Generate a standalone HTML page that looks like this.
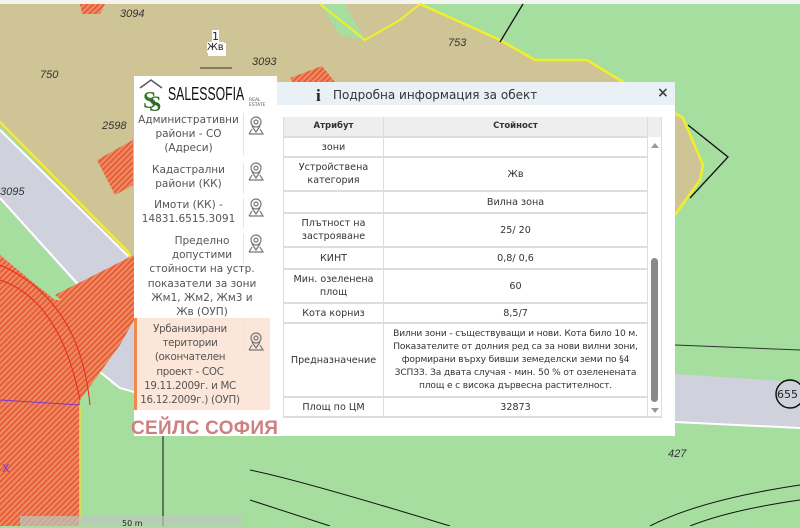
<!DOCTYPE html>
<html><head><meta charset="utf-8">
<style>
*{margin:0;padding:0;box-sizing:border-box}
body{width:800px;height:526px;overflow:hidden;position:relative;font-family:"DejaVu Sans","Liberation Sans",sans-serif;background:#a5de9f}
.abs{position:absolute}
.lbl{position:absolute;font:italic 11px "Liberation Sans",sans-serif;color:#333}
#panel{left:134px;top:82px;width:541px;height:354px;background:#fff}
#hdr{left:277px;top:82px;width:398px;height:23px;background:#e9f1f6}
#logo{left:134px;top:76px;width:143px;height:36px;background:#fff}
#list{left:134px;top:112px;width:136px;height:298px;overflow:hidden;background:#fff}
.it{position:absolute;left:0;width:136px;font-size:10.5px;line-height:14.2px;color:#555;text-align:center}
.it .t{width:109px;text-align:center}
.it .ic{position:absolute;left:109px;top:0;width:27px;border-left:1px solid #e4e4e4}
table{position:absolute;left:283px;top:117px;width:365px;border-collapse:collapse;font-size:9.6px;color:#333}
td{border-bottom:2px solid #ddd;border-right:1px solid #ddd;text-align:center;vertical-align:middle;line-height:13px}
td:first-child{width:100px;border-left:1px solid #ddd}
</style></head><body>
<svg class="abs" style="left:0;top:0" width="800" height="526">
<defs>
<pattern id="h" width="4" height="4" patternUnits="userSpaceOnUse" patternTransform="rotate(45)">
<rect width="4" height="4" fill="#ee8a5c"/><rect width="1.6" height="4" fill="#e5553a"/></pattern>
</defs>
<rect width="800" height="526" fill="#a5de9f"/>
<rect width="800" height="4" fill="#f3f3f0"/>
<polygon points="0,4 420,4 365,40 420,4 500,40 535,60 587,60 620,80 683,118 703,165 700,180 675,215 600,215 300,300 133,262 0,125" fill="#cfc496"/>
<polygon points="320,4 345,4 365,40 340,35" fill="#a5de9f"/>
<polyline points="320,4 365,40 400,20 420,4" fill="none" stroke="#f2ee2c" stroke-width="2"/>
<polyline points="420,4 500,40 535,60 587,60 620,80 683,118 703,165 700,180 675,215" fill="none" stroke="#f2ee2c" stroke-width="2.5"/>
<polyline points="0,122 128,252 134,264" fill="none" stroke="#f2ee2c" stroke-width="2.5"/>
<polygon points="0,128 130,258 134,270 134,392 112,385 95,360 90,320 85,295 0,200" fill="#cfd2dc"/>
<polyline points="0,130 128,256" fill="none" stroke="#fff" stroke-width="2"/>
<polyline points="0,198 85,292 90,330 100,372 120,388 134,392" fill="none" stroke="#fff" stroke-width="2"/>
<polygon points="675,374 800,382 800,428 675,422" fill="#cfd2dc"/>
<polyline points="675,422 800,428" stroke="#fff" stroke-width="2" fill="none"/>
<polyline points="675,345 800,350" stroke="#333" stroke-width="1" fill="none"/>
<circle cx="790" cy="394" r="14" fill="none" stroke="#111" stroke-width="1.5"/>
<polyline points="523,4 500,42" stroke="#111" stroke-width="1.3" fill="none"/>
<polyline points="688,125 728,157 690,198" stroke="#111" stroke-width="1.3" fill="none"/>
<polygon points="80,4 105,4 100,14 82,14" fill="url(#h)"/>
<polygon points="290,78 322,66 335,82 300,95" fill="url(#h)"/>
<polygon points="97,160 133,140 133,185 115,195" fill="url(#h)"/>
<polygon points="0,255 30,280 55,300 90,300 134,262 134,320 120,345 80,400 80,526 0,526" fill="url(#h)"/>
<polygon points="55,295 134,255 134,300 90,322" fill="url(#h)"/>
<path d="M0,280 Q60,300 80,400" stroke="#e82a1a" stroke-width="1" fill="none"/>
<path d="M0,265 Q80,300 90,405" stroke="#e82a1a" stroke-width="1" fill="none"/>
<polyline points="0,400 80,405" stroke="#7a3ad0" stroke-width="1" fill="none"/>
<polyline points="80,405 80,526" stroke="#e8e040" stroke-width="1.5" fill="none"/>
<polyline points="163,436 163,526" stroke="#111" stroke-width="1" fill="none"/>
<path d="M250,500 L330,526 M250,470 Q300,480 450,526" stroke="#111" stroke-width="1" fill="none"/>
<path d="M650,526 Q700,500 800,485 M690,526 Q730,510 800,500" stroke="#111" stroke-width="1" fill="none"/>
<rect x="20" y="516" width="222" height="10" fill="#bfc6bf" opacity=".7"/>
<line x1="200" y1="68" x2="232" y2="68" stroke="#333"/>
<rect x="208" y="43" width="18" height="13" fill="#fff"/>
</svg>
<div class="lbl" style="left:120px;top:8px">3094</div>
<div class="abs" style="left:212px;top:30px;font-size:11px;background:#fff;color:#222">1</div>
<div class="abs" style="left:207px;top:42px;font-size:10px;background:#fff;color:#222">Жв</div>
<div class="lbl" style="left:252px;top:56px">3093</div>
<div class="lbl" style="left:40px;top:69px">750</div>
<div class="lbl" style="left:448px;top:37px">753</div>
<div class="lbl" style="left:102px;top:120px">2598</div>
<div class="lbl" style="left:0px;top:186px">3095</div>
<div class="lbl" style="left:668px;top:448px">427</div>
<div class="abs" style="left:777px;top:388px;font-size:11px;color:#222">655</div>
<div class="abs" style="left:2px;top:462px;font-size:11px;color:#7a3ad0">X</div>
<div class="abs" style="left:122px;top:519px;font-size:8px;color:#222">50 m</div>

<div id="panel" class="abs"></div>
<div id="hdr" class="abs"></div>
<div class="abs" style="left:316px;top:86px;font:bold 17px 'Liberation Serif',serif;color:#222">i</div>
<div class="abs" style="left:333px;top:88px;font-size:12px;color:#333">Подробна информация за обект</div>
<div class="abs" style="left:657px;top:85px;font-size:14px;font-weight:bold;color:#444">×</div>
<div id="logo" class="abs">
<svg class="abs" style="left:4px;top:2px" width="26" height="34"><path d="M2,10 L13,2 L24,10" stroke="#556" fill="none" stroke-width="1.5"/><text x="5" y="30" font-size="24" font-family="Liberation Serif" fill="#3a7a2a" font-weight="bold">S</text><text x="11" y="33" font-size="22" font-family="Liberation Serif" fill="#2f6a25" font-weight="bold">S</text></svg>
<div class="abs" style="left:34px;top:8px;font:18px 'Liberation Sans',sans-serif;transform:scaleX(.68);transform-origin:left;color:#111">SALESSOFIA</div>
<div class="abs" style="left:115px;top:22px;font-size:4.5px;color:#555">REAL ESTATE</div>
</div>
<div id="list" class="abs">
<div class="it" style="top:1px"><div class="t">Административни<br>райони - СО<br>(Адреси)</div><div class="ic" style="height:42px"></div></div>
<div class="it" style="top:51px"><div class="t">Кадастрални<br>райони (КК)</div><div class="ic" style="height:30px"></div></div>
<div class="it" style="top:86px"><div class="t">Имоти (КК) -<br>14831.6515.3091</div><div class="ic" style="height:30px"></div></div>
<div class="it" style="top:122px"><div class="t" style="width:136px">Пределно<br>допустими<br>стойности на устр.<br>показатели за зони<br>Жм1, Жм2, Жм3 и<br>Жв (ОУП)</div><div class="ic" style="height:30px"></div></div>
<div class="it" style="top:206px;height:92px;background:#fce6da;border-left:3px solid #ef8a4a;padding-top:4px"><div class="t" style="width:106px;white-space:nowrap;letter-spacing:-0.3px;font-size:10.3px">Урбанизирани<br>територии<br>(окончателен<br>проект - СОС<br>19.11.2009г. и МС<br>16.12.2009г.) (ОУП)</div><div class="ic" style="height:30px;top:0;left:106px"></div></div>
</div>
<svg class="abs" style="left:246px;top:114px" width="22" height="230" fill="none" stroke="#777" stroke-width="1.2">
<g><circle cx="10" cy="8" r="5"/><circle cx="10" cy="8" r="2"/><path d="M6,12 L10,18 L14,12 M3,20 L17,20 L14,15 M3,20 L6,15"/></g>
<g transform="translate(0,46)"><circle cx="10" cy="8" r="5"/><circle cx="10" cy="8" r="2"/><path d="M6,12 L10,18 L14,12 M3,20 L17,20 L14,15 M3,20 L6,15"/></g>
<g transform="translate(0,82)"><circle cx="10" cy="8" r="5"/><circle cx="10" cy="8" r="2"/><path d="M6,12 L10,18 L14,12 M3,20 L17,20 L14,15 M3,20 L6,15"/></g>
<g transform="translate(0,118)"><circle cx="10" cy="8" r="5"/><circle cx="10" cy="8" r="2"/><path d="M6,12 L10,18 L14,12 M3,20 L17,20 L14,15 M3,20 L6,15"/></g>
</svg>
<svg class="abs" style="left:246px;top:330px" width="22" height="25" fill="none" stroke="#777" stroke-width="1.2"><circle cx="10" cy="8" r="5"/><circle cx="10" cy="8" r="2"/><path d="M6,12 L10,18 L14,12 M3,20 L17,20 L14,15 M3,20 L6,15"/></svg>
<div class="abs" style="left:131px;top:418px;font:bold 19px 'Liberation Sans',sans-serif;color:#cf7f80;letter-spacing:.3px">СЕЙЛС СОФИЯ</div>

<table>
<tr style="height:20px;background:#eee"><td style="font-size:8.5px;font-weight:bold">Атрибут</td><td style="font-size:8.5px;font-weight:bold">Стойност</td></tr>
<tr style="height:20px"><td>зони</td><td></td></tr>
<tr style="height:34px"><td>Устройствена<br>категория</td><td>Жв</td></tr>
<tr style="height:22px"><td></td><td>Вилна зона</td></tr>
<tr style="height:34px"><td>Плътност на<br>застрояване</td><td>25/ 20</td></tr>
<tr style="height:22px"><td>КИНТ</td><td>0,8/ 0,6</td></tr>
<tr style="height:34px"><td>Мин. озеленена<br>площ</td><td>60</td></tr>
<tr style="height:20px"><td>Кота корниз</td><td>8,5/7</td></tr>
<tr style="height:74px"><td>Предназначение</td><td style="font-size:9.1px;letter-spacing:-0.15px">Вилни зони - съществуващи и нови. Кота било 10 м.<br>Показателите от долния ред са за нови вилни зони,<br>формирани върху бивши земеделски земи по §4<br>ЗСПЗЗ. За двата случая - мин. 50 % от озеленената<br>площ е с висока дървесна растителност.</td></tr>
<tr style="height:20px"><td>Площ по ЦМ</td><td>32873</td></tr>
</table>
<div class="abs" style="left:283px;top:117px;width:379px;height:20px;background:#eee;z-index:-1"></div>
<div class="abs" style="left:648px;top:117px;width:14px;height:20px;background:#eee;border-right:1px solid #ddd"></div>
<div class="abs" style="left:648px;top:137px;width:14px;height:281px;background:#fff;border-right:1px solid #ddd;border-bottom:2px solid #ddd"></div>
<div class="abs" style="left:651px;top:143px;width:0;height:0;border-left:4px solid transparent;border-right:4px solid transparent;border-bottom:5px solid #999"></div>
<div class="abs" style="left:651px;top:258px;width:7px;height:144px;background:#8a8a8a;border-radius:4px"></div>
<div class="abs" style="left:651px;top:408px;width:0;height:0;border-left:4px solid transparent;border-right:4px solid transparent;border-top:5px solid #999"></div>
</body></html>
